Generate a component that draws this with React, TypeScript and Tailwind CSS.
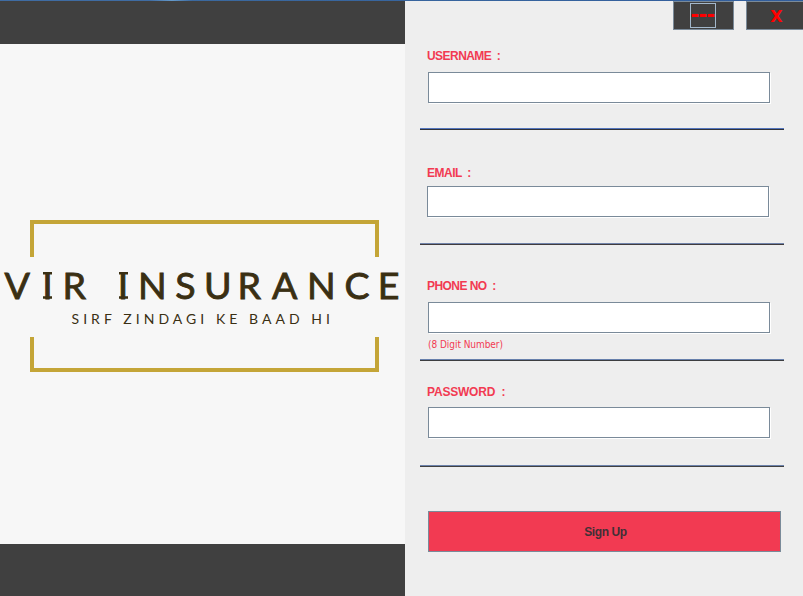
type FieldProps = {
  label: string;
  labelClass: string;
  inputClass: string;
  lineClass: string;
  className: string;
  hint?: string;
};

function Field({ label, labelClass, inputClass, lineClass, className, hint }: FieldProps) {
  return (
    <div className={`flex flex-col ${className}`}>
      <label
        className={`block whitespace-pre pl-[7px] font-['Liberation_Sans',sans-serif] text-[12px] font-bold leading-[14px] text-[#f23a52] ${labelClass}`}
      >
        {label}
      </label>
      <input
        aria-label={label}
        className={`h-[31px] w-[342px] shrink-0 border border-[#7a8a99] bg-white shadow-[1px_1px_0_#ffffff] outline-none ${inputClass}`}
      />
      <div className="min-h-0 flex-1 pl-2 pt-[6px] font-['DejaVu_Sans_Condensed','DejaVu_Sans',sans-serif] text-[10px] leading-[12px] tracking-[-0.05px] text-[#f23a52]">
        {hint}
      </div>
      <div className={`h-[2px] w-[364px] shrink-0 border-t ${lineClass}`} />
    </div>
  );
}

function Logo() {
  return (
    <svg width="405" height="160" viewBox="0 216 405 160" className="block">
      <g fill="none" stroke="#c4a537" strokeWidth="4">
        <path d="M32 257V222H377V257" />
        <path d="M32 337V370H377V337" />
      </g>
      <g fill="#3a2f13" stroke="#3a2f13" fontFamily="Lato, sans-serif">
        <text
          y="298.7"
          fontSize="37.5"
          strokeWidth="0.9"
          x="4.6 42.3 62.5 94 117.8 138 175.3 204 237.5 272 307 344.5 377.8"
        >
          VIR INSURANCE
        </text>
        <path d="M43 273.2h9M43 297.5h9M119 273.2h9M119 297.5h9" strokeWidth="2.6" />
        <text x="71.5" y="324" fontSize="14" stroke="none" textLength="258.5" lengthAdjust="spacing">
          SIRF ZINDAGI KE BAAD HI
        </text>
      </g>
    </svg>
  );
}

export default function App() {
  return (
    <div className="flex h-[596px] w-[803px] flex-col overflow-hidden bg-[#eeeeee]">
      <div className="h-px shrink-0 bg-[linear-gradient(90deg,#3f6ca3_0,#3f6ca3_150px,#659acb_172px,#3b699f_192px,#315d9c_100%)]" />
      <div className="flex min-h-0 flex-1">
        <section className="flex w-[405px] shrink-0 flex-col bg-[#f7f7f7]">
          <div className="h-[43px] bg-[#404040]" />
          <div className="flex h-[500px] items-start pt-[172px]">
            <Logo />
          </div>
          <div className="flex-1 bg-[#404040]" />
        </section>
        <main className="flex w-[398px] flex-col pl-[15px]">
          <div className="-mr-2 flex h-[29px] shrink-0 justify-end gap-3">
            <button className="flex h-[29px] w-[61px] items-center justify-center border border-[#7a8a99] bg-[#404040] pr-[2px]">
              <span className="flex h-[25px] w-[26px] items-center justify-center whitespace-nowrap border border-[#a3b8cc] font-['DejaVu_Sans',sans-serif] text-[21px] font-bold leading-[23px] tracking-[-0.7px] text-[#ff0000]">
                ---
              </span>
            </button>
            <button className="h-[29px] w-[65px] border border-[#7a8a99] bg-[#404040] pr-[4px] pt-px font-['DejaVu_Sans',sans-serif] text-[16px] font-bold leading-[27px] text-[#ff0000]">
              X
            </button>
          </div>
          <Field
            label="USERNAME  :"
            className="mt-[19px] h-[81px]"
            labelClass="tracking-[-0.55px]"
            inputClass="mt-[9px] ml-2"
            lineClass="border-[#5375bd] bg-[#303239]"
          />
          <Field
            label="EMAIL  :"
            className="mt-[36px] h-[79px]"
            labelClass="tracking-[-0.5px]"
            inputClass="mt-[6px] ml-[7px]"
            lineClass="border-[#7184aa] bg-[#403b3e]"
          />
          <Field
            label="PHONE NO  :"
            className="mt-[34px] h-[82px]"
            labelClass="tracking-[-0.55px]"
            inputClass="mt-[9px] ml-2"
            lineClass="border-[#6780ac] bg-[#3c3d40]"
            hint="(8 Digit Number)"
          />
          <Field
            label="PASSWORD  :"
            className="mt-[24px] h-[82px]"
            labelClass="tracking-[-0.2px]"
            inputClass="mt-[8px] ml-2"
            lineClass="border-[#6c82ab] bg-[#404040]"
          />
          <button className="ml-2 mt-[44px] h-[41px] w-[353px] shrink-0 border border-[#7a8a99] bg-[#f23a52] pl-[2px] font-['Liberation_Sans',sans-serif] text-[12px] font-bold leading-[14px] tracking-[-0.4px] text-[#403036]">
            Sign Up
          </button>
        </main>
      </div>
    </div>
  );
}
